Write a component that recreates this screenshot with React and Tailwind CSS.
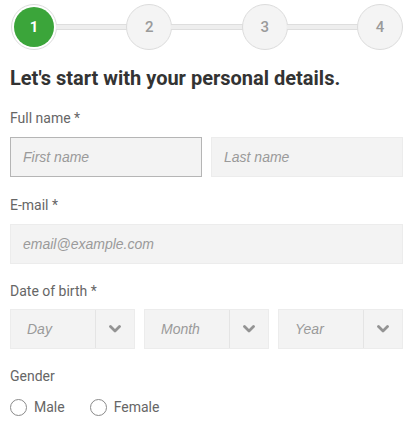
import React from 'react';

const steps = [1, 2, 3, 4];

const Step = ({ n, active }) => (
  <div
    className={`flex h-[46px] w-[46px] shrink-0 items-center justify-center rounded-full border border-[#dcdcdc] ${
      active ? 'bg-white p-[2px]' : 'bg-[#f4f4f4]'
    }`}
  >
    {active ? (
      <div className="flex h-full w-full items-center justify-center rounded-full bg-[#3ba53a] text-[15px] font-bold text-white">
        {n}
      </div>
    ) : (
      <span className="text-[15px] font-medium text-[#9a9a9a]">{n}</span>
    )}
  </div>
);

const Label = ({ children }) => (
  <label className="block text-[14px] leading-none text-[#666]">{children}</label>
);

const Input = ({ placeholder, focused }) => (
  <input
    placeholder={placeholder}
    className={`h-[40px] w-full bg-[#f3f3f3] px-3 font-['Liberation_Sans',Arial,sans-serif] text-[14px] italic text-[#555] outline-none placeholder:text-[#9a9a9a] border ${
      focused ? 'border-[#b5b5b5]' : 'border-[#ececec]'
    }`}
  />
);

const Chevron = () => (
  <svg width="12" height="8" viewBox="0 0 12 8" className="text-[#939393]">
    <polyline
      points="1.5,1.5 6,6 10.5,1.5"
      fill="none"
      stroke="currentColor"
      strokeWidth="2.8"
      strokeLinecap="round"
      strokeLinejoin="round"
    />
  </svg>
);

const Select = ({ placeholder }) => (
  <div className="flex h-[40px] flex-1 border border-[#ececec] bg-[#f3f3f3]">
    <span className="flex flex-1 items-center px-4 font-['Liberation_Sans',Arial,sans-serif] text-[14px] italic text-[#9a9a9a]">
      {placeholder}
    </span>
    <span className="flex w-[39px] items-center justify-center border-l border-[#e4e4e4]">
      <Chevron />
    </span>
  </div>
);

const Radio = ({ label }) => (
  <label className="flex items-center gap-[7px] text-[14px] text-[#666]">
    <span className="h-[17px] w-[17px] rounded-full border border-[#8a8a8a] bg-white" />
    {label}
  </label>
);

export default function App() {
  return (
    <div className="min-h-[434px] bg-white pl-[10px] pr-[11px] font-['Roboto',sans-serif]">
      <div className="flex items-center pl-px pt-[4px]">
        {steps.map((n, i) => (
          <React.Fragment key={n}>
            {i > 0 && (
              <div className="mx-[-1px] h-[6px] flex-1 border-y border-[#dedede] bg-[#eeeeee]" />
            )}
            <Step n={n} active={n === 1} />
          </React.Fragment>
        ))}
      </div>

      <h1 className="mt-[18px] text-[20px] font-bold leading-none text-[#333]">
        Let's start with your personal details.
      </h1>

      <div className="mt-[23px]">
        <Label>Full name *</Label>
        <div className="mt-[12px] flex gap-[9px]">
          <Input placeholder="First name" focused />
          <Input placeholder="Last name" />
        </div>
      </div>

      <div className="mt-[21px]">
        <Label>E-mail *</Label>
        <div className="mt-[12px]">
          <Input placeholder="email@example.com" />
        </div>
      </div>

      <div className="mt-[20px]">
        <Label>Date of birth *</Label>
        <div className="mt-[11px] flex gap-[9px]">
          <Select placeholder="Day" />
          <Select placeholder="Month" />
          <Select placeholder="Year" />
        </div>
      </div>

      <div className="mt-[20px]">
        <Label>Gender</Label>
        <div className="mt-[14px] flex gap-[25px]">
          <Radio label="Male" />
          <Radio label="Female" />
        </div>
      </div>
    </div>
  );
}
